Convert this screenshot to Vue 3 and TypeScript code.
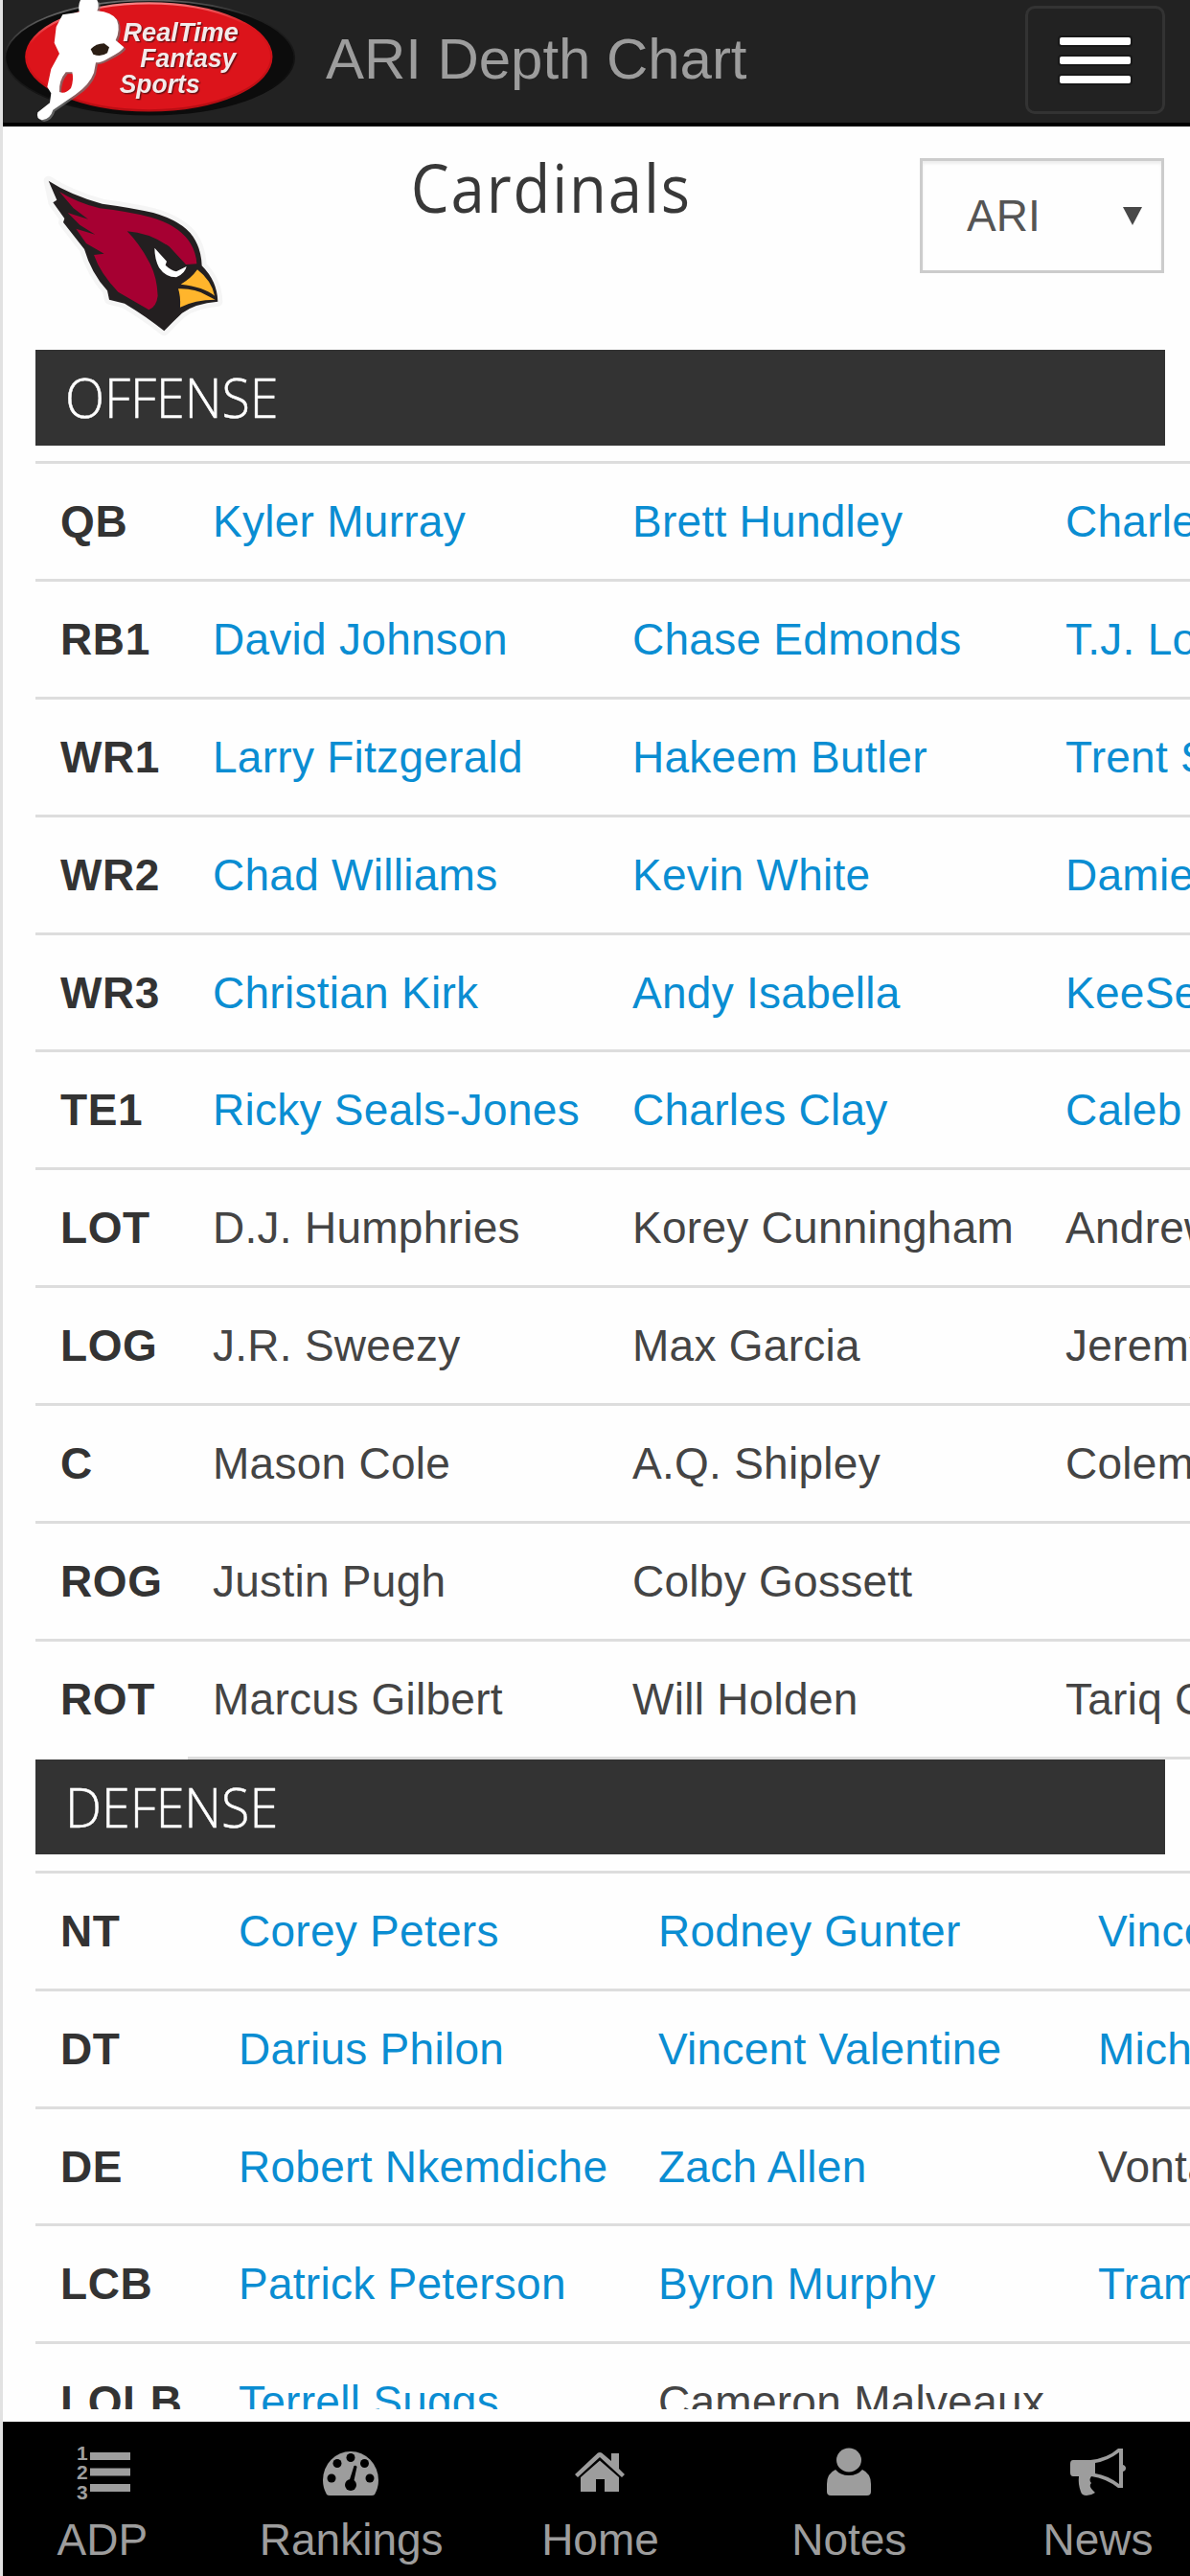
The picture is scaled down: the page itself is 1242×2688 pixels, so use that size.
<script setup lang="ts">
interface Row {
  pos: string
  players: string[]
  /** How many of the players, from the first, link to a profile. */
  links: number
}

interface Unit {
  id: string
  title: string
  rows: Row[]
}

const units: Unit[] = [
  {
    id: 'offense',
    title: 'OFFENSE',
    rows: [
      { pos: 'QB', players: ['Kyler Murray', 'Brett Hundley', 'Charles Kanoff'], links: 3 },
      { pos: 'RB1', players: ['David Johnson', 'Chase Edmonds', 'T.J. Logan'], links: 3 },
      { pos: 'WR1', players: ['Larry Fitzgerald', 'Hakeem Butler', 'Trent Sherfield'], links: 3 },
      { pos: 'WR2', players: ['Chad Williams', 'Kevin White', 'Damiere Byrd'], links: 3 },
      { pos: 'WR3', players: ['Christian Kirk', 'Andy Isabella', 'KeeSean Johnson'], links: 3 },
      { pos: 'TE1', players: ['Ricky Seals-Jones', 'Charles Clay', 'Caleb Wilson'], links: 3 },
      { pos: 'LOT', players: ['D.J. Humphries', 'Korey Cunningham', 'Andrew Lauderdale'], links: 0 },
      { pos: 'LOG', players: ['J.R. Sweezy', 'Max Garcia', 'Jeremy Vujnovich'], links: 0 },
      { pos: 'C', players: ['Mason Cole', 'A.Q. Shipley', 'Coleman Shelton'], links: 0 },
      { pos: 'ROG', players: ['Justin Pugh', 'Colby Gossett', ''], links: 0 },
      { pos: 'ROT', players: ['Marcus Gilbert', 'Will Holden', 'Tariq Cole'], links: 0 },
    ],
  },
  {
    id: 'defense',
    title: 'DEFENSE',
    rows: [
      { pos: 'NT', players: ['Corey Peters', 'Rodney Gunter', 'Vincent Valentine'], links: 3 },
      { pos: 'DT', players: ['Darius Philon', 'Vincent Valentine', 'Michael Dogbe'], links: 3 },
      { pos: 'DE', players: ['Robert Nkemdiche', 'Zach Allen', 'Vontarrius Dora'], links: 2 },
      { pos: 'LCB', players: ['Patrick Peterson', 'Byron Murphy', 'Tramaine Brock'], links: 3 },
      { pos: 'LOLB', players: ['Terrell Suggs', 'Cameron Malveaux', ''], links: 1 },
    ],
  },
]
</script>

<template>
  <div class="page">
    <header class="navbar">
      <svg class="brand" viewBox="9 0 921 390" width="307" height="130">
        <defs>
          <linearGradient id="rim" x1="0" y1="0" x2="0.35" y2="1">
            <stop offset="0" stop-color="#8a8a8a" />
            <stop offset="0.4" stop-color="#222" />
            <stop offset="1" stop-color="#0c0c0c" />
          </linearGradient>
          <linearGradient id="gloss" x1="0.1" y1="0" x2="0.3" y2="1">
            <stop offset="0" stop-color="#ff9a9a" />
            <stop offset="0.35" stop-color="#dc141b" />
            <stop offset="1" stop-color="#b90d13" />
          </linearGradient>
        </defs>
        <ellipse cx="469" cy="180" rx="453" ry="179" fill="#0c0c0c" stroke="url(#rim)" stroke-width="5" />
        <ellipse cx="466" cy="178" rx="384" ry="168" fill="#dc141b" stroke="url(#gloss)" stroke-width="7" />
        <g class="brand-text">
          <text x="385" y="129" textLength="362" lengthAdjust="spacingAndGlyphs">RealTime</text>
          <text x="439" y="209" textLength="300" lengthAdjust="spacingAndGlyphs">Fantasy</text>
          <text x="374" y="291" textLength="252" lengthAdjust="spacingAndGlyphs">Sports</text>
        </g>
        <path
          d="M252 0H304Q312 18 304 34Q350 38 366 62Q378 92 362 126L388 148Q384 160 340 182Q318 196 300 196L294 228Q280 266 236 296L166 344Q158 372 132 376Q112 372 118 352L156 322L160 292L148 272L160 216L186 168L170 134L176 84L196 46L248 38Q244 16 252 0ZM206 226Q184 252 186 288Q204 296 222 276Q232 250 226 226Z"
          fill="#767676" fill-rule="evenodd" transform="translate(6 5)" opacity=".75"
        />
        <path
          d="M252 0H304Q312 18 304 34Q350 38 366 62Q378 92 362 126L388 148Q384 160 340 182Q318 196 300 196L294 228Q280 266 236 296L166 344Q158 372 132 376Q112 372 118 352L156 322L160 292L148 272L160 216L186 168L170 134L176 84L196 46L248 38Q244 16 252 0ZM206 226Q184 252 186 288Q204 296 222 276Q232 250 226 226Z"
          fill="#fff" fill-rule="evenodd"
        />
        <path d="M284 154Q300 136 326 136L342 148L336 166Q316 180 292 170Z" fill="#2b1e14" />
      </svg>
      <span class="navbar-title">ARI Depth Chart</span>
      <button class="menu" type="button" aria-label="Menu">
        <i></i><i></i><i></i>
      </button>
    </header>

    <main class="content">
      <div class="team">
        <svg class="team-logo" viewBox="0 0 660 600" width="220" height="200">
          <path
            d="M62 86Q130 130 230 158Q320 170 390 186Q480 212 514 260Q540 298 542 352Q590 400 592 464Q520 470 480 500Q450 528 424 556Q370 512 300 470L252 458L246 430Q196 376 174 300L108 216L112 204L76 154Z"
            fill="#fff" stroke="#f5f5f5" stroke-width="30" stroke-linejoin="round"
          />
          <path
            d="M62 86Q130 130 230 158Q320 170 390 186Q480 212 514 260Q540 298 542 352Q590 400 592 464Q520 470 480 500Q450 528 424 556Q370 512 300 470L252 458L246 430Q196 376 174 300L108 216L112 204L76 154L88 146Z"
            fill="#231f20"
          />
          <path
            d="M96 120Q150 154 222 172Q310 182 382 200Q462 222 500 272Q524 306 526 346L492 348L440 292Q376 248 308 244Q350 286 380 346Q402 390 404 446Q400 480 376 490L280 434Q224 376 204 318L236 314L180 282L148 236L208 254L160 224L122 186L186 206L140 172Z"
            fill="#a60032"
          />
          <path d="M394 296L432 338L428 350Q444 366 462 370Q478 362 494 354Q490 376 462 388Q428 388 408 358Q394 330 394 296Z" fill="#fff" />
          <path d="M528 364Q572 398 582 446Q548 418 476 410Q508 392 528 364Z" fill="#ffb52c" />
          <path d="M468 424Q520 422 556 444L584 458Q520 458 474 482Q476 448 468 424Z" fill="#ffb52c" />
        </svg>
        <h1 class="team-name"><span>Cardinals</span></h1>
        <div class="select" role="combobox">
          <span>ARI</span>
          <svg viewBox="0 0 20 19" width="20" height="19"><path d="M0 0H20L10 19Z" fill="#484848" /></svg>
        </div>
      </div>

      <section v-for="unit in units" :key="unit.id" :class="['unit', unit.id]">
        <h2 class="unit-title"><span>{{ unit.title }}</span></h2>
        <div class="chart">
          <div v-for="row in unit.rows" :key="row.pos" class="row">
            <b class="pos">{{ row.pos }}</b>
            <span v-for="(player, i) in row.players" :key="i" :class="['player', { link: i < row.links }]">{{ player }}</span>
          </div>
        </div>
        <div class="chart-edge"></div>
      </section>
    </main>

    <nav class="tabs">
      <a class="tab">
        <svg viewBox="0 0 60 60" width="60" height="60">
          <path d="M18 9H60V17H18ZM18 25.500H60V33.500H18ZM18 42H60V50H18Z" transform="translate(-1 0)" />
          <g class="digits">
            <text x="3" y="17">1</text>
            <text x="3" y="37">2</text>
            <text x="3" y="58">3</text>
          </g>
        </svg>
        <span>ADP</span>
      </a>
      <a class="tab">
        <svg viewBox="0 0 60 60" width="60" height="60">
          <path d="M4 53Q0 46 0 38A29 30 0 0 1 58 38Q58 46 54 53Q53 54 51 54H7Q5 54 4 53Z" />
          <g fill="#000">
            <circle cx="9" cy="36" r="4.500" /><circle cx="15" cy="20.500" r="4.500" />
            <circle cx="29" cy="14.500" r="4.500" /><circle cx="43.500" cy="20.500" r="4.500" />
            <circle cx="49" cy="36" r="4.500" /><circle cx="29" cy="43" r="6" />
            <path d="M26.500 42L32.500 23Q34.500 22 35.500 24L31.500 43Z" />
          </g>
        </svg>
        <span>Rankings</span>
      </a>
      <a class="tab">
        <svg viewBox="0 0 60 60" width="60" height="60">
          <path d="M4 32L28 9.500Q30 8.500 32 9.500L42 18V10H50V26L56 32L53 35L30 14L7 35Z" />
          <path d="M10 35L30 17.500L50 35V50H35V37H26V50H10Z" />
        </svg>
        <span>Home</span>
      </a>
      <a class="tab">
        <svg viewBox="0 0 60 60" width="60" height="60">
          <ellipse cx="30" cy="17" rx="13" ry="12.500" />
          <path d="M16 27Q21 33 30 33Q39 33 44 27Q53 31 53 42V50Q53 54 49 54H11Q7 54 7 50V42Q7 31 16 27Z" />
        </svg>
        <span>Notes</span>
      </a>
      <a class="tab">
        <svg viewBox="0 0 60 60" width="60" height="60">
          <path
            d="M4 17H22Q40 15 51 5H56V22Q59 23 59 25.500Q59 28 56 29V46H51Q38 36 23 34Q20 38 23 41Q20 44 24 48L27 51Q23 54 18 54Q13 54 12 50Q9 42 10 34H4Q1 34 1 30V21Q1 17 4 17ZM27 20V31Q40 33 52 42V9Q40 18 27 20Z"
            fill-rule="evenodd"
          />
        </svg>
        <span>News</span>
      </a>
    </nav>
  </div>
</template>

<style>
body {
  margin: 0;
  background: #fefefe;
}
</style>

<style scoped>
.page {
  box-sizing: border-box;
  display: flex;
  flex-direction: column;
  width: 1242px;
  height: 2688px;
  border-left: 3px solid #e2e2e2;
  overflow: hidden;
  background: #fefefe;
  font-family: "Liberation Sans", Arial, sans-serif;
  font-size: 46px;
  color: #444;
}

.navbar {
  box-sizing: border-box;
  flex: none;
  display: flex;
  height: 132px;
  background: #222;
  border-bottom: 4px solid #000;
}

.brand {
  flex: none;
  display: block;
}

.brand-text {
  font: italic bold 82px "Liberation Sans", Arial, sans-serif;
  fill: #f3eaea;
  filter: drop-shadow(4px 4px 2px #6d1013);
}

.navbar-title {
  width: 500px;
  margin-left: 30px;
  font-size: 60px;
  letter-spacing: -.05px;
  line-height: 124px;
  color: #9d9d9d;
  white-space: nowrap;
}

.menu {
  box-sizing: border-box;
  display: flex;
  flex-direction: column;
  align-items: center;
  gap: 12px;
  width: 146px;
  height: 113px;
  margin: 6px 26px 0 auto;
  padding: 30px 0 0;
  background: none;
  border: 3px solid #333;
  border-radius: 10px;
}

.menu i {
  width: 74px;
  height: 8px;
  border-radius: 2px;
  background: #fff;
  box-shadow: 0 0 0 2px #181818;
}

.content {
  flex: none;
  height: 2382px;
  overflow: hidden;
}

.team {
  display: flex;
  align-items: flex-start;
  height: 233px;
  padding-left: 27px;
}

.team-logo {
  flex: none;
  margin-top: 28px;
}

.team-name {
  flex: none;
  width: 650px;
  margin: 13px 0 0;
  font: 400 69px/100px "Open Sans", "Noto Sans", sans-serif;
  text-align: center;
  color: #383838;
}

.team-name span {
  display: inline-block;
  letter-spacing: 2px;
  transform: scaleX(.92);
}

.select {
  box-sizing: border-box;
  display: flex;
  align-items: center;
  justify-content: space-between;
  width: 255px;
  height: 120px;
  margin: 33px 0 0 60px;
  padding: 0 20px 0 46px;
  border: 3px solid #ccc;
  box-shadow: inset 0 3px 3px #eee;
  color: #555;
}

.unit-title {
  height: 99.500px;
  width: 1178.500px;
  margin: 0 0 16.500px 34px;
  background: #333;
  font: 300 57px/98px "Open Sans", "Noto Sans", sans-serif;
  color: #fff;
}

.unit-title span {
  display: inline-block;
  margin-left: 31px;
  -webkit-text-stroke: .5px #fff;
  transform: scaleX(.943);
  transform-origin: 0 50%;
}

.chart {
  margin-left: 34px;
}

.row {
  box-sizing: border-box;
  display: grid;
  grid-template-columns: 158px 438px 452px 600px;
  height: 122.900px;
  border-top: 3px solid #ddd;
  line-height: 121px;
  white-space: nowrap;
}

.defense .row {
  grid-template-columns: 185px 438px 459px 600px;
}

.pos {
  padding-left: 26px;
  letter-spacing: .6px;
  color: #333;
}

.player {
  padding-left: 27px;
  letter-spacing: .27px;
}

.link {
  color: #0a8dd2;
}

.chart-edge {
  height: 3px;
  margin-left: 193px;
  background: #ddd;
}

.tabs {
  flex: none;
  display: flex;
  height: 161px;
  margin-top: 13px;
  background: #000;
  color: #9d9d9d;
}

.tab {
  flex: none;
  display: flex;
  flex-direction: column;
  align-items: center;
  width: 259.800px;
  padding-top: 23px;
  line-height: 52px;
}

.tab:first-child {
  margin-left: -26px;
}

.tab svg {
  display: block;
  fill: #9d9d9d;
}

.tab span {
  margin-top: 14px;
}

.digits {
  font: bold 21px "Liberation Sans", Arial, sans-serif;
}
</style>
